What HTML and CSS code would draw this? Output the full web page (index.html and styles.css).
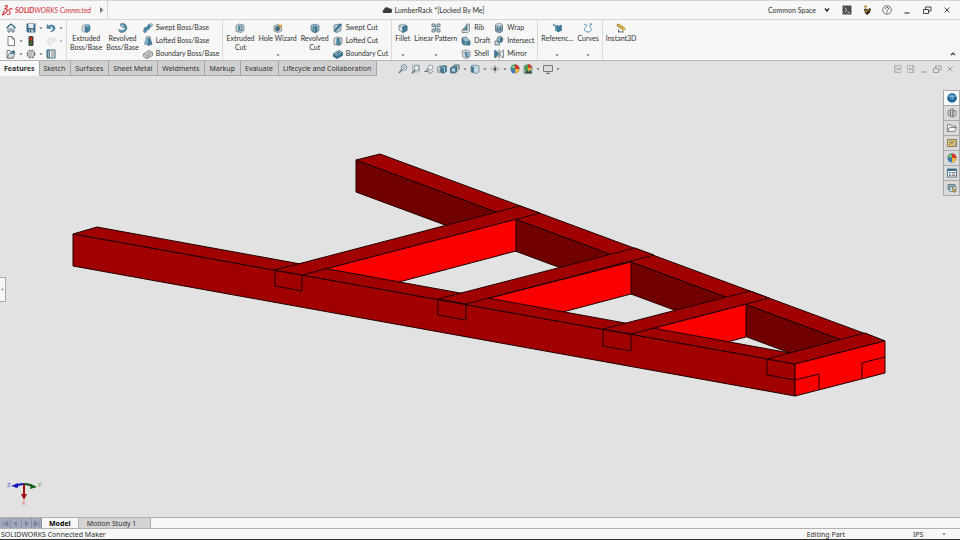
FILE: index.html
```html
<!DOCTYPE html>
<html lang="en">
<head>
    <meta charset="UTF-8">
    <meta name="viewport" content="width=device-width, initial-scale=1.0">
    <title>SOLIDWORKS Connected - LumberRack</title>
    <link rel="stylesheet" href="styles.css">
</head>
<body>
    <!-- Icon set, all drawn on a 20 x 20 grid -->
    <svg class="sprite" aria-hidden="true">
        <symbol id="home" viewBox="0 0 20 20"><path d="M4 9v9h4v-6h4v6h4V9" fill="#e4edf2" stroke="#44606f" stroke-width="1.6"/><path d="M1 10 10 2l9 8" fill="none" stroke="#2f6783" stroke-width="2.4"/></symbol>
        <symbol id="save" viewBox="0 0 20 20"><path d="M1 1h18v18H3l-2-2z" fill="#3d6d89"/><path d="M5 2h10v8H5z" fill="#e8eef2"/><path d="M6 13h9v6H6z" fill="#b7c6cf"/><path d="M8 14h2v4H8z" fill="#345"/></symbol>
        <symbol id="undo" viewBox="0 0 20 20"><path d="M2 3v8h8L7 8c4-2 7 0 7 3s-2 5-5 6c6 0 9-3 9-7 0-5-7-8-13-4z" fill="#4a88ab" stroke="#2f627f"/></symbol>
        <symbol id="redo" viewBox="0 0 20 20"><path d="M18 3v8h-8l3-3c-4-2-7 0-7 3s2 5 5 6c-6 0-9-3-9-7 0-5 7-8 13-4z" fill="#dcdcdc" stroke="#bdbdbd"/></symbol>
        <symbol id="new" viewBox="0 0 20 20"><path d="M4 1h8l5 5v13H4z" fill="#fff" stroke="#555" stroke-width="1.5"/><path d="M12 1v5h5" fill="none" stroke="#555" stroke-width="1.5"/></symbol>
        <symbol id="light" viewBox="0 0 20 20"><rect x="5" y="0" width="10" height="20" rx="3" fill="#3c3c34"/><circle cx="10" cy="5" r="3" fill="#d3321f"/><circle cx="10" cy="10" r="2" fill="#6a5a20"/><circle cx="10" cy="15" r="2.6" fill="#3c7a35"/></symbol>
        <symbol id="open" viewBox="0 0 20 20"><path d="M2 3h6l2 3h5v12H2z" fill="#eef2f4" stroke="#555" stroke-width="1.5"/><path d="m2 18 4-9h12l-4 9z" fill="#cfdde5" stroke="#555" stroke-width="1.3"/><path d="M9 9c0-4 3-5 5-5V1l5 5-5 4V7c-2 0-3 1-3 3z" fill="#3a7596"/></symbol>
        <symbol id="gear" viewBox="0 0 20 20"><circle cx="10" cy="10" r="7.5" fill="#ddd" stroke="#666" stroke-width="2.4" stroke-dasharray="4 1.9"/><circle cx="10" cy="10" r="5.8" fill="#eee" stroke="#777"/><circle cx="10" cy="10" r="2.5" fill="#fff" stroke="#666" stroke-width="1.4"/></symbol>
        <symbol id="props" viewBox="0 0 20 20"><path d="M2 2h16v16H2z" fill="#fff" stroke="#3f6073" stroke-width="2"/><path d="M2 2h6v16H2z" fill="#467b99"/><path d="M10 6h6M10 10h6M10 14h6" stroke="#555" stroke-width="1.6"/><path d="M4 6h2M4 10h2M4 14h2" stroke="#fff" stroke-width="2"/></symbol>
        <symbol id="extrude" viewBox="0 0 20 20"><path d="m2 6 6-3 4 2v11l-5 3-5-3z" fill="#d5dcdf" stroke="#68747a"/><path d="m8 6 6-4 4 3v10l-6 4-4-2z" fill="#4c8dad" stroke="#2c5a73"/><path d="m8 6 4 2 6-3M12 8v11" stroke="#2c5a73" fill="none"/><path d="m8 6 6-4 4 3-6 3z" fill="#93bfd4"/></symbol>
        <symbol id="revolve" viewBox="0 0 20 20"><path d="M5 2c8-3 14 2 12 9l-5-1c1-3-3-5-6-3z" fill="#4c8dad" stroke="#2c5a73"/><path d="M5 2c6 1 9 4 7 8l-6-3z" fill="#a8cada" stroke="#4d7386"/><path d="M1 13c6 3 12 2 17-3-1 6-6 9-11 9-3 0-5-2-6-6z" fill="#5a99b8" stroke="#2c5a73"/></symbol>
        <symbol id="sweep" viewBox="0 0 20 20"><path d="M4 16c0-8 4-3 6-6s1-6 6-6" fill="none" stroke="#2c5a73" stroke-width="6.5" stroke-linecap="round"/><path d="M4 16c0-8 4-3 6-6s1-6 6-6" fill="none" stroke="#4d90b3" stroke-width="4.5" stroke-linecap="round"/><circle cx="16" cy="4" r="2" fill="#a8cada"/></symbol>
        <symbol id="loft" viewBox="0 0 20 20"><path d="M7 3h7l4 13-6 3-9-3z" fill="#427e9d" stroke="#2c5368"/><path d="M7 3h3L9 18l-6-2z" fill="#8fb7ca"/><path d="M7 1h7v3H7z" fill="#d1dce1" stroke="#5a6c75"/></symbol>
        <symbol id="boundary" viewBox="0 0 20 20"><path d="M1 10 12 3l7 4v6L8 19l-7-4z" fill="#d0d3d4" stroke="#666" stroke-width="1.4"/><path d="m1 10 7 4 11-7M8 14v5M5 8l7 4v5M9 5l7 4" fill="none" stroke="#777"/></symbol>
        <symbol id="cut" viewBox="0 0 20 20"><path d="m2 5 6-3 10 2v11l-5 4-11-2z" fill="#c9d1d5" stroke="#5f6d74" stroke-width="1.3"/><path d="M7 6h7v9H7z" fill="#548fac" stroke="#325c72"/><path d="M10 7h3v6h-3z" fill="#a5c7d6"/></symbol>
        <symbol id="wizard" viewBox="0 0 20 20"><path d="m2 6 7-3 8 3v10l-7 3-8-3z" fill="#c9d1d5" stroke="#5f6d74" stroke-width="1.3"/><ellipse cx="9" cy="11" rx="4" ry="5" fill="#47819f" stroke="#2d4d5d"/><path d="m8 14 8-9" stroke="#333" stroke-width="2"/><path d="m13 1 2 3 4-1-2 3 2 4-4-2-3 2 1-4-3-3h4z" fill="#e29b36"/></symbol>
        <symbol id="revcut" viewBox="0 0 20 20"><path d="m2 5 8-3 8 3v10l-4 3V9H6v9l-4-3z" fill="#9fc1d1" stroke="#3a6478" stroke-width="1.3"/><path d="M7 7h6v12H7z" fill="#39779a" stroke="#285268"/><path d="M9 8v10" stroke="#b9d6e3"/></symbol>
        <symbol id="sweepcut" viewBox="0 0 20 20"><path d="m2 4 14-2v13l-8 4-6-2z" fill="#b8c9d1" stroke="#4c6673" stroke-width="1.3"/><path d="M5 17c0-8 3-4 5-8s2-5 7-6" fill="none" stroke="#34718f" stroke-width="4"/></symbol>
        <symbol id="loftcut" viewBox="0 0 20 20"><path d="m2 5 6-3 10 2v11l-5 4-11-2z" fill="#dbe1e4" stroke="#555f64" stroke-width="1.3"/><path d="M8 5h5l2 12H7z" fill="#4c89a8" stroke="#2e5b71"/></symbol>
        <symbol id="boundcut" viewBox="0 0 20 20"><path d="M1 10 12 3l7 4v6L8 19l-7-4z" fill="#397796" stroke="#244d61" stroke-width="1.4"/><path d="m1 10 11-7 7 4-11 7z" fill="#9bc3d5" stroke="#315c70"/><path d="m6 9 6-3 3 2-7 3z" fill="#396e88"/></symbol>
        <symbol id="fillet" viewBox="0 0 20 20"><path d="m2 5 8-3 8 4v9l-8 4-8-5z" fill="#dde7eb" stroke="#50646e" stroke-width="1.3"/><path d="M9 9c0-3 4-4 9-3v9l-8 4z" fill="#417f9f" stroke="#315c71"/><path d="m2 5 7 4v10" fill="none" stroke="#50646e"/></symbol>
        <symbol id="pattern" viewBox="0 0 20 20"><path d="M2 2h6v5H2zM12 2h6v5h-6zM2 12h6v6H2zM12 12h6v6h-6z" fill="#c3d3da" stroke="#4c5b62" stroke-width="1.4"/><path d="M9 4v12M9 10h6" stroke="#3c7b9b" stroke-width="1.6"/></symbol>
        <symbol id="rib" viewBox="0 0 20 20"><path d="M12 2h5v14l-4 3H2v-4z" fill="#d6dde0" stroke="#59666c" stroke-width="1.3"/><path d="M12 4v10H3c5-1 8-5 9-10z" fill="#3d7c9c" stroke="#295066"/></symbol>
        <symbol id="draft" viewBox="0 0 20 20"><path d="m2 4 8-2 8 8v8H5l-3-4z" fill="#447f9e" stroke="#2c5368" stroke-width="1.3"/><path d="m2 4 8-2 8 8-10 1z" fill="#a4c7d6" stroke="#50717f"/><path d="m8 11 2 7" stroke="#d0dfe6"/></symbol>
        <symbol id="shell" viewBox="0 0 20 20"><path d="m2 4 8-2 8 3v10l-7 4-7-3z" fill="#d6dde0" stroke="#59666c" stroke-width="1.3"/><path d="m7 6 8 1v9l-5 1z" fill="#2f6e90"/><path d="m10 8 5 0v6l-3 1z" fill="#85b1c5"/></symbol>
        <symbol id="wrap" viewBox="0 0 20 20"><path d="M3 4h14v12c-4 4-10 4-14 0z" fill="#8ba6b3" stroke="#425963" stroke-width="1.3"/><ellipse cx="10" cy="4" rx="7" ry="3" fill="#d5dfe4" stroke="#425963"/><path d="M6 10h8v5H6z" fill="#326f8f"/><path d="M8 12h4" stroke="#d6e3e9" stroke-width="1.5"/></symbol>
        <symbol id="intersect" viewBox="0 0 20 20"><path d="M2 10h9v8H2z" fill="#c7d6dd" stroke="#4e5e66" stroke-width="1.4"/><circle cx="12" cy="7" r="6" fill="#a5bfca" stroke="#44545c" stroke-width="1.4"/><path d="M7 10h4v3c-2 0-4-1-4-3zM12 4h4v7h-4z" fill="#2e6c8e"/></symbol>
        <symbol id="mirror" viewBox="0 0 20 20"><path d="M1 3h3l4 5v4l-4 5H1z" fill="#407c9b" stroke="#285269"/><path d="M19 3h-3l-4 5v4l4 5h3z" fill="#e4eaed" stroke="#4d5d65" stroke-width="1.4"/><path d="M10 1v18" stroke="#333" stroke-width="1.5"/></symbol>
        <symbol id="reference" viewBox="0 0 20 20"><path d="M4 1v6M1 4h6M2 2l4 4M6 2 2 6" stroke="#4a82a0"/><path d="M7 5h5v12l-5-2z" fill="#5292b3" stroke="#2e637e"/><path d="m12 7 7-3v11l-7 3z" fill="#3c7b9b" stroke="#2e637e"/></symbol>
        <symbol id="curves" viewBox="0 0 20 20"><path d="M2 3c6-2 7 3 3 6s-2 9 5 9 8-6 5-9 0-7 4-7M13 2h5" fill="none" stroke="#4b8fb3" stroke-width="1.8"/></symbol>
        <symbol id="instant" viewBox="0 0 20 20"><path d="m2 3 4-1 13 9-3 4L2 6z" fill="#edc246" stroke="#8a6c22"/><path d="m5 3-1 3m4-1-2 3m5-1-2 3m5-1-2 3" stroke="#5e4b1c"/><path d="M5 12v6l3-1m-3 1 10 0m0 0-3-2" stroke="#444" stroke-width="1.4" fill="none"/></symbol>
        <symbol id="zoomfit" viewBox="0 0 20 20"><circle cx="12" cy="7" r="5.5" fill="#edf3f6" stroke="#6b7b83" stroke-width="1.8"/><path d="m8 11-6 7" stroke="#68767d" stroke-width="3"/><path d="M12 4v6M9 7h6" stroke="#5b8aa1" stroke-width="1.2"/></symbol>
        <symbol id="zoomarea" viewBox="0 0 20 20"><path d="M3 2h14v14H3z" fill="none" stroke="#7a8a92" stroke-width="1.6" stroke-dasharray="3 2"/><circle cx="11" cy="8" r="5" fill="#edf3f6" stroke="#6b7b83" stroke-width="1.6"/><path d="m8 12-6 7" stroke="#68767d" stroke-width="2.6"/></symbol>
        <symbol id="prev" viewBox="0 0 20 20"><circle cx="13" cy="7" r="5" fill="#f0f3f4" stroke="#77858c" stroke-width="1.6"/><path d="M9 10 2 15h8" fill="none" stroke="#77858c" stroke-width="2.4"/><path d="M9 18c4 1 8-1 9-4" fill="none" stroke="#77858c" stroke-width="2"/></symbol>
        <symbol id="section" viewBox="0 0 20 20"><path d="m1 6 6-3v13l-6 1z" fill="#b9c8cf" stroke="#4e6670"/><path d="m8 5 5-2 6 1v11l-5 3H8z" fill="#427f9d" stroke="#31576a"/><path d="M10 7h5v9" fill="none" stroke="#cbdde5" stroke-width="1.6"/></symbol>
        <symbol id="orient" viewBox="0 0 20 20"><path d="m1 8 4-3h9v10l-3 3H1z" fill="#4c829d" stroke="#355766" stroke-width="1.3"/><path d="M7 2h11v10" fill="none" stroke="#44535a" stroke-width="1.8"/><path d="M4 9h6v6H4z" fill="#bdd2dc"/></symbol>
        <symbol id="display" viewBox="0 0 20 20"><path d="m2 4 6-2 10 2v12l-6 3-10-3z" fill="#c5dae4" stroke="#5e7783" stroke-width="1.3"/><path d="m2 4 6 2v12l-6-2z" fill="#457d99"/></symbol>
        <symbol id="eye" viewBox="0 0 20 20"><path d="M1 10c5-5 13-5 18 0-5 4-13 4-18 0z" fill="#e6e6e6" stroke="#999" stroke-width="1.3"/><circle cx="10" cy="10" r="3" fill="#454545"/><path d="M10 2v4M10 14v4" stroke="#777" stroke-width="1.6"/></symbol>
        <symbol id="ball" viewBox="0 0 20 20"><circle cx="10" cy="10" r="9" fill="#3f74b7"/><path d="M10 10V1a9 9 0 0 0-9 9z" fill="#4aa35c"/><path d="M10 10V1a9 9 0 0 1 9 9z" fill="#d53a30"/><path d="M10 10h9a9 9 0 0 1-9 9z" fill="#e5b93f"/><circle cx="7" cy="6" r="2.2" fill="#fff" opacity=".6"/></symbol>
        <symbol id="scene" viewBox="0 0 20 20"><path d="M1 3h18v16H1z" fill="#8fa4ae"/><circle cx="10" cy="8" r="7.5" fill="#4c9c54"/><path d="M10 8V.5A7.5 7.5 0 0 1 17.500 8z" fill="#cf3c32"/><path d="M10 8h7.500a7 7 0 0 1-7.500 7z" fill="#e0b23c"/><path d="m3 19 5-6 3 3 3-4 4 7z" fill="#2d4856"/></symbol>
        <symbol id="monitor" viewBox="0 0 20 20"><path d="M1 3h18v12H1z" fill="#d9dde0" stroke="#6d6d6d" stroke-width="1.8"/><path d="M10 15v3M6 19h8" stroke="#777" stroke-width="2"/></symbol>
        <symbol id="panel-left" viewBox="0 0 20 20"><path d="M3 3h13v14H3zM6 3v14" fill="none" stroke="#a8a8a8" stroke-width="1.6"/><path d="m13 7-4 3 4 3z" fill="#888"/></symbol>
        <symbol id="panel-right" viewBox="0 0 20 20"><path d="M3 3h13v14H3zM13 3v14" fill="none" stroke="#a8a8a8" stroke-width="1.6"/><path d="m7 7 4 3-4 3z" fill="#888"/></symbol>
        <symbol id="minimize" viewBox="0 0 20 20"><path d="M5 16h10" stroke="currentColor" stroke-width="2.200"/></symbol>
        <symbol id="restore" viewBox="0 0 20 20"><path d="M3 9h10v8H3zM7 9V4h11v8h-5" fill="none" stroke="currentColor" stroke-width="1.8"/></symbol>
        <symbol id="close" viewBox="0 0 20 20"><path d="m5 5 10 10M15 5 5 15" stroke="currentColor" stroke-width="1.8"/></symbol>
        <symbol id="chevron" viewBox="0 0 20 20"><path d="m6 7 4 5 4-5" fill="none" stroke="#333" stroke-width="3"/></symbol>
        <symbol id="chevron-up" viewBox="0 0 20 20"><path d="m6 12 4-4 4 4" fill="none" stroke="#333" stroke-width="2.400"/></symbol>
        <symbol id="terminal" viewBox="0 0 20 20"><path d="M1 1h18v18H1z" fill="#4d4d4d"/><path d="m5 5 5 5-5 5M11 15h5" fill="none" stroke="#e4e4e4" stroke-width="1.600"/></symbol>
        <symbol id="avatar" viewBox="0 0 20 20"><circle cx="7" cy="3" r="2.500" fill="#b98525"/><path d="M4 8c4-3 6 1 8 1l3-3 3 2-2 7-6 5-4-4z" fill="#2f2818"/><path d="m7 9 4 2-2 5-3-3zM13 8l3 2-3 4z" fill="#b7832e"/></symbol>
        <symbol id="help" viewBox="0 0 20 20"><circle cx="10" cy="10" r="8.500" fill="#fafafa" stroke="#444" stroke-width="1.500"/><path d="M7 8c0-4 6-4 6-.5 0 2-3 2-3 5M10 14v2" fill="none" stroke="#333" stroke-width="1.800"/></symbol>
        <symbol id="cloud" viewBox="0 0 20 20"><path d="M3 16a4 4 0 0 1 1-7 5.500 5.500 0 0 1 10-2 4.600 4.600 0 0 1 3 9z" fill="#3b3b3b"/></symbol>
        <symbol id="compass" viewBox="0 0 20 20"><circle cx="10" cy="10" r="9.500" fill="#17679a"/><path d="M2 7c5-5 11-5 16 0-5 3-11 3-16 0z" fill="#66a8d0"/><circle cx="10" cy="10" r="3" fill="#fff"/><path d="m9 8 3 2-3 2zM1 12h5M14 12h5" fill="#174a6d" stroke="#0e4163"/></symbol>
        <symbol id="library" viewBox="0 0 20 20"><path d="m2 6 5-2v13l-5-3zM7 3l5-2v17l-5-1zM12 4l6 2v9l-6 3z" fill="#d2d2d2" stroke="#666" stroke-width="1.400"/></symbol>
        <symbol id="folder" viewBox="0 0 20 20"><path d="M1 17V3h6l2 3h8v3M1 17 5 9h14l-4 8z" fill="#f3f3f3" stroke="#666" stroke-width="1.500"/></symbol>
        <symbol id="palette" viewBox="0 0 20 20"><path d="M1 3h18v14H1z" fill="#e8c775" stroke="#706545" stroke-width="1.500"/><path d="M5 6h4v3H5zM12 10h5v4h-5z" fill="#fff" stroke="#5f5a49"/><path d="m4 14 11-9" stroke="#6c5b2d" stroke-width="1.600"/></symbol>
        <symbol id="custom" viewBox="0 0 20 20"><path d="M1 2h18v16H1z" fill="#fff" stroke="#345b73" stroke-width="1.600"/><path d="M1 2h18v4H1z" fill="#3a6f91"/><path d="M4 9h3M4 12h3M4 15h3" stroke="#2d6f9c" stroke-width="2"/><path d="M9 9h8M9 12h8M9 15h8" stroke="#555" stroke-width="1.400"/></symbol>
        <symbol id="forum" viewBox="0 0 20 20"><path d="M2 3h14v10H2z" fill="#8fb0bf" stroke="#566b75" stroke-width="1.500"/><path d="M5 7h13v10H5z" fill="#c7d6dc" stroke="#566b75" stroke-width="1.300"/><path d="m10 8 8 8-4 3-2-4z" fill="#d9a93a" stroke="#695326"/></symbol>
        <symbol id="caret" viewBox="0 0 8 8"><path d="M1 3h6L4 6z" fill="#444"/></symbol>
        <symbol id="first" viewBox="0 0 20 20"><path d="M5 4v12M15 4l-7 6 7 6z" fill="#777e99" stroke="#777e99" stroke-width="1.500"/></symbol>
        <symbol id="back" viewBox="0 0 20 20"><path d="m13 4-7 6 7 6z" fill="#777e99"/></symbol>
        <symbol id="next" viewBox="0 0 20 20"><path d="m7 4 7 6-7 6z" fill="#777e99"/></symbol>
        <symbol id="last" viewBox="0 0 20 20"><path d="M15 4v12M5 4l7 6-7 6z" fill="#777e99" stroke="#777e99" stroke-width="1.500"/></symbol>
    </svg>

    <header class="titlebar">
        <div class="brand">
            <svg class="brand-mark" viewBox="0 0 22 22" aria-hidden="true"><g fill="none" stroke="#d8323a" stroke-width="2.200"><path d="M5 2c7-2 8 1 3 4L5 8c6-1 7 2 4 6-2 3-4 5-8 6l4-9"/><path d="M21 8c-5-2-9 1-6 5s2 6-5 6"/></g></svg>
            <span class="brand-name"><b>SOLID</b>WORKS Connected</span>
            <button class="icon-button brand-more" aria-label="Show menu"><svg viewBox="0 0 20 20"><path d="m6 4 7 6-7 6z" fill="#777"/></svg></button>
        </div>
        <h1 class="document"><svg class="icon"><use href="#cloud"/></svg>LumberRack *[Locked By Me]</h1>
        <div class="window-tools">
            <label class="space">
                <select aria-label="Collaborative space"><option>Common Space</option></select>
                <svg class="icon"><use href="#chevron"/></svg>
            </label>
            <button class="icon-button" aria-label="Command line"><svg><use href="#terminal"/></svg></button>
            <button class="icon-button" aria-label="Account"><svg><use href="#avatar"/></svg></button>
            <button class="icon-button" aria-label="Help"><svg><use href="#help"/></svg></button>
            <button class="icon-button" aria-label="Minimize"><svg><use href="#minimize"/></svg></button>
            <button class="icon-button" aria-label="Restore"><svg><use href="#restore"/></svg></button>
            <button class="icon-button" aria-label="Close"><svg><use href="#close"/></svg></button>
        </div>
    </header>

    <div class="ribbon">
        <div class="group quick">
            <button class="tool" aria-label="Home"><svg class="icon"><use href="#home"/></svg></button>
            <button class="tool" aria-label="Save"><svg class="icon"><use href="#save"/></svg><svg class="caret"><use href="#caret"/></svg></button>
            <button class="tool" aria-label="Undo"><svg class="icon"><use href="#undo"/></svg><svg class="caret"><use href="#caret"/></svg></button>
            <button class="tool" aria-label="New"><svg class="icon"><use href="#new"/></svg><svg class="caret"><use href="#caret"/></svg></button>
            <button class="tool" aria-label="Rebuild"><svg class="icon"><use href="#light"/></svg></button>
            <button class="tool disabled" aria-label="Redo" disabled><svg class="icon"><use href="#redo"/></svg><svg class="caret"><use href="#caret"/></svg></button>
            <button class="tool" aria-label="Open"><svg class="icon"><use href="#open"/></svg><svg class="caret"><use href="#caret"/></svg></button>
            <button class="tool" aria-label="Options"><svg class="icon"><use href="#gear"/></svg><svg class="caret"><use href="#caret"/></svg></button>
            <button class="tool" aria-label="File properties"><svg class="icon"><use href="#props"/></svg></button>
        </div>
        <div class="group">
            <button class="big"><svg class="icon"><use href="#extrude"/></svg><span>Extruded<br>Boss/Base</span></button>
            <button class="big"><svg class="icon"><use href="#revolve"/></svg><span>Revolved<br>Boss/Base</span></button>
            <div class="stack">
                <button class="small"><svg class="icon"><use href="#sweep"/></svg>Swept Boss/Base</button>
                <button class="small"><svg class="icon"><use href="#loft"/></svg>Lofted Boss/Base</button>
                <button class="small"><svg class="icon"><use href="#boundary"/></svg>Boundary Boss/Base</button>
            </div>
        </div>
        <div class="group">
            <button class="big"><svg class="icon"><use href="#cut"/></svg><span>Extruded<br>Cut</span></button>
            <button class="big"><svg class="icon"><use href="#wizard"/></svg><span>Hole Wizard</span><svg class="caret"><use href="#caret"/></svg></button>
            <button class="big"><svg class="icon"><use href="#revcut"/></svg><span>Revolved<br>Cut</span></button>
            <div class="stack">
                <button class="small"><svg class="icon"><use href="#sweepcut"/></svg>Swept Cut</button>
                <button class="small"><svg class="icon"><use href="#loftcut"/></svg>Lofted Cut</button>
                <button class="small"><svg class="icon"><use href="#boundcut"/></svg>Boundary Cut</button>
            </div>
        </div>
        <div class="group">
            <button class="big"><svg class="icon"><use href="#fillet"/></svg><span>Fillet</span><svg class="caret"><use href="#caret"/></svg></button>
            <button class="big"><svg class="icon"><use href="#pattern"/></svg><span>Linear Pattern</span><svg class="caret"><use href="#caret"/></svg></button>
            <div class="stack">
                <button class="small"><svg class="icon"><use href="#rib"/></svg>Rib</button>
                <button class="small"><svg class="icon"><use href="#draft"/></svg>Draft</button>
                <button class="small"><svg class="icon"><use href="#shell"/></svg>Shell</button>
            </div>
            <div class="stack">
                <button class="small"><svg class="icon"><use href="#wrap"/></svg>Wrap</button>
                <button class="small"><svg class="icon"><use href="#intersect"/></svg>Intersect</button>
                <button class="small"><svg class="icon"><use href="#mirror"/></svg>Mirror</button>
            </div>
        </div>
        <div class="group">
            <button class="big"><svg class="icon"><use href="#reference"/></svg><span>Referenc...</span><svg class="caret"><use href="#caret"/></svg></button>
            <button class="big"><svg class="icon"><use href="#curves"/></svg><span>Curves</span><svg class="caret"><use href="#caret"/></svg></button>
        </div>
        <div class="group last">
            <button class="big"><svg class="icon"><use href="#instant"/></svg><span>Instant3D</span></button>
        </div>
        <button class="icon-button collapse" aria-label="Collapse ribbon"><svg><use href="#chevron-up"/></svg></button>
    </div>

    <div class="tab-row">
        <nav class="tabs">
            <button class="tab active">Features</button>
            <button class="tab">Sketch</button>
            <button class="tab">Surfaces</button>
            <button class="tab">Sheet Metal</button>
            <button class="tab">Weldments</button>
            <button class="tab">Markup</button>
            <button class="tab">Evaluate</button>
            <button class="tab">Lifecycle and Collaboration</button>
        </nav>
        <div class="view-tools">
            <button class="icon-button" aria-label="Zoom to fit"><svg><use href="#zoomfit"/></svg></button>
            <button class="icon-button" aria-label="Zoom to area"><svg><use href="#zoomarea"/></svg></button>
            <button class="icon-button" aria-label="Previous view"><svg><use href="#prev"/></svg></button>
            <button class="icon-button" aria-label="Section view"><svg><use href="#section"/></svg></button>
            <button class="icon-button" aria-label="View orientation"><svg><use href="#orient"/></svg></button>
            <svg class="caret"><use href="#caret"/></svg>
            <button class="icon-button" aria-label="Display style"><svg><use href="#display"/></svg></button>
            <svg class="caret"><use href="#caret"/></svg>
            <button class="icon-button" aria-label="Hide or show items"><svg><use href="#eye"/></svg></button>
            <svg class="caret"><use href="#caret"/></svg>
            <button class="icon-button" aria-label="Edit appearance"><svg><use href="#ball"/></svg></button>
            <button class="icon-button" aria-label="Apply scene"><svg><use href="#scene"/></svg></button>
            <svg class="caret"><use href="#caret"/></svg>
            <button class="icon-button" aria-label="View settings"><svg><use href="#monitor"/></svg></button>
            <svg class="caret"><use href="#caret"/></svg>
        </div>
        <div class="view-window">
            <button class="icon-button" aria-label="Left pane"><svg><use href="#panel-left"/></svg></button>
            <button class="icon-button" aria-label="Right pane"><svg><use href="#panel-right"/></svg></button>
            <button class="icon-button" aria-label="Minimize document"><svg><use href="#minimize"/></svg></button>
            <button class="icon-button" aria-label="Restore document"><svg><use href="#restore"/></svg></button>
            <button class="icon-button" aria-label="Close document"><svg><use href="#close"/></svg></button>
        </div>
    </div>

    <main class="viewport">
        <svg class="model" viewBox="0 76 960 441" role="img" aria-label="Lumber rack model">
            <g stroke="#220000" stroke-width="1" stroke-linejoin="round">
                <!-- back rail -->
                <path d="M356 160 842 340 790 353 356 192z" fill="#700000"/>
                <path d="M356 160 380 154 885 341 842 340z" fill="#a00000"/>
                <!-- inner faces of the rungs -->
                <path d="M516 219V251L380 287 302 275z" fill="#fa0000"/>
                <path d="M631 262V294L540 318 466 304z" fill="#fa0000"/>
                <path d="M746 304V337L700 349 631 334z" fill="#fa0000"/>
                <!-- front rail -->
                <path d="M73 234 97 227 790 353 795 364z" fill="#a00000"/>
                <path d="M73 234 795 364V396L73 266z" fill="#a00000"/>
                <!-- rungs -->
                <path d="M274 270 298 264 520 206 540 213 302 275z" fill="#a00000"/>
                <path d="M438 299 635 248 654 255 466 304z" fill="#a00000"/>
                <path d="M603 329 750 291 769 298 631 334z" fill="#a00000"/>
                <path d="M767 359 865 333 885 341 795 364z" fill="#a00000"/>
                <path d="M795 364 885 341V373L795 396z" fill="#fa0000"/>
                <!-- lap joints -->
                <path d="M275 270V286L302 291V275M438 299V315L466 320V304M603 329V346L631 351V334M767 359V375L795 380L819 374V390M885 357 862 363V379" fill="none"/>
            </g>
        </svg>
        <button class="pane-handle" aria-label="Show feature tree">+</button>
        <svg class="triad" viewBox="0 0 40 30" role="img" aria-label="Axes">
            <path d="M18 5c-4 0-7 1-9 3" fill="none" stroke="#1818b8" stroke-width="2"/><path d="m5 7 7-3v5z" fill="#1818b8"/>
            <path d="M18 5c4 0 7 1 9 3" fill="none" stroke="#0b5c14" stroke-width="2"/><path d="m31 8-7 2 1-5z" fill="#0b5c14"/>
            <path d="M18 5v13" stroke="#a01010" stroke-width="2"/><path d="m15 15 6 0-3 6z" fill="#a01010"/>
            <text x="1" y="8" fill="#4545e0">Z</text><text x="32" y="8" fill="#3b8a45">Y</text><text x="16" y="26" fill="#e06060">X</text>
        </svg>
        <aside class="task-pane">
            <button class="task active" aria-label="3DEXPERIENCE"><svg class="icon"><use href="#compass"/></svg></button>
            <button class="task" aria-label="Design library"><svg class="icon"><use href="#library"/></svg></button>
            <button class="task" aria-label="File explorer"><svg class="icon"><use href="#folder"/></svg></button>
            <button class="task" aria-label="View palette"><svg class="icon"><use href="#palette"/></svg></button>
            <button class="task" aria-label="Appearances"><svg class="icon"><use href="#ball"/></svg></button>
            <button class="task" aria-label="Custom properties"><svg class="icon"><use href="#custom"/></svg></button>
            <button class="task" aria-label="Forum"><svg class="icon"><use href="#forum"/></svg></button>
        </aside>
    </main>

    <div class="study-row">
        <div class="pager">
            <button aria-label="First"><svg><use href="#first"/></svg></button>
            <button aria-label="Previous"><svg><use href="#back"/></svg></button>
            <button aria-label="Next"><svg><use href="#next"/></svg></button>
            <button aria-label="Last"><svg><use href="#last"/></svg></button>
        </div>
        <button class="study active">Model</button>
        <button class="study">Motion Study 1</button>
    </div>

    <footer class="status">
        <span>SOLIDWORKS Connected Maker</span>
        <span class="mode">Editing Part</span>
        <label class="units">
            <select aria-label="Unit system"><option>IPS</option></select>
            <svg class="caret"><use href="#caret"/></svg>
        </label>
    </footer>
</body>
</html>
```
FILE: styles.css
```css
* {
    box-sizing: border-box;
}

body {
    display: flex;
    flex-direction: column;
    height: 100vh;
    margin: 0;
    overflow: hidden;
    background: #e2e2e2;
    color: #303030;
    font-family: "Noto Sans", "Open Sans", sans-serif;
    font-size: 7px;
    line-height: 9px;
}

button,
select {
    margin: 0;
    padding: 0;
    border: 0;
    background: none;
    color: inherit;
    font: inherit;
    white-space: nowrap;
}

select {
    appearance: none;
}

.sprite {
    position: absolute;
    width: 0;
    height: 0;
}

.icon,
.icon-button,
.icon-button svg {
    display: block;
    flex: none;
    width: 10px;
    height: 10px;
}

.caret {
    display: block;
    flex: none;
    width: 4px;
    height: 4px;
}

/* Title bar */
.titlebar,
.ribbon {
    background: #f7f7f7;
    font-family: Lato, "Noto Sans", sans-serif;
}

.titlebar {
    display: flex;
    align-items: center;
    height: 20px;
    border-top: 1px solid #d6d6d6;
    border-bottom: 1px solid #d6d6d6;
}

.brand {
    display: flex;
    align-items: center;
    align-self: stretch;
    gap: 2px;
    width: 108px;
    padding-left: 2px;
    border-right: 1px solid #d6d6d6;
}

.brand-mark {
    width: 11px;
    height: 11px;
}

.brand-name {
    color: #d2343b;
    font-style: italic;
}

.brand-more {
    margin-left: auto;
}

.document {
    display: flex;
    flex: 1;
    align-items: center;
    justify-content: center;
    gap: 3px;
    margin: 0;
    padding-right: 10px;
    font-size: 7px;
    font-weight: normal;
}

.window-tools {
    display: flex;
    align-items: center;
    gap: 10px;
    padding-right: 8px;
}

.space {
    display: flex;
    align-items: center;
    gap: 6px;
}

/* Command ribbon */
.ribbon {
    display: flex;
    height: 41px;
    border-bottom: 1px solid #b5b5b5;
}

.group {
    display: flex;
    gap: 4px;
    padding: 1px 3px 0;
    border-right: 1px solid #dadada;
}

.group.last {
    border-right: 0;
}

.quick {
    display: grid;
    grid-template-columns: repeat(3, 20px);
    grid-auto-rows: 13px;
    gap: 0;
    padding-right: 0;
    padding-left: 6px;
}

.tool {
    display: flex;
    align-items: center;
    gap: 3px;
}

.disabled {
    opacity: 0.6;
}

.big {
    display: flex;
    flex-direction: column;
    align-items: center;
    height: 38px;
    padding: 2px 0;
}

.big .icon {
    margin-bottom: 1px;
}

.big .caret {
    margin-top: auto;
}

.stack {
    display: grid;
    grid-auto-rows: 13px;
}

.small {
    display: flex;
    align-items: center;
    gap: 3px;
}

.collapse {
    align-self: flex-end;
    margin: 0 2px 1px auto;
}

/* Command tabs and view toolbar */
.tab-row {
    display: flex;
    align-items: center;
    height: 15px;
    padding-right: 5px;
}

.tabs {
    display: flex;
    height: 15px;
}

.tab {
    padding: 0 5px 0 4px;
    border: 1px solid #a5a5a5;
    border-width: 0 1px 1px 0;
    background: #d0d0d0;
}

.tab.active {
    padding-right: 4px;
    border-bottom-color: #f7f7f7;
    background: #f7f7f7;
    font-weight: bold;
}

.view-tools,
.view-window {
    display: flex;
    align-items: center;
    gap: 3px;
}

.view-tools {
    margin-left: 21px;
}

.view-window {
    margin-left: auto;
    color: #989898;
}

/* Graphics area */
.viewport {
    position: relative;
    flex: 1;
    min-height: 0;
}

.model {
    display: block;
    width: 100%;
    height: 100%;
}

.pane-handle {
    position: absolute;
    top: 201px;
    left: 0;
    width: 6px;
    height: 25px;
    border: 1px solid #aaa;
    border-left: 0;
    background: #f7f7f7;
    color: #888;
}

.triad {
    position: absolute;
    bottom: 8px;
    left: 6px;
    width: 40px;
    height: 30px;
    font-size: 6px;
}

.task-pane {
    position: absolute;
    top: 14px;
    right: 0;
    width: 17px;
    border: 1px solid #aaa;
    border-bottom: 0;
    background: #dadada;
}

.task {
    display: flex;
    align-items: center;
    justify-content: center;
    width: 100%;
    height: 15px;
    border-bottom: 1px solid #aaa;
}

.task.active {
    background: #fafafa;
}

/* Study tabs */
.study-row {
    display: flex;
    height: 11px;
    border-top: 1px solid #b0b0b0;
    background: #f7f7f7;
}

.pager {
    display: flex;
    width: 42px;
    padding-left: 1px;
    background: #a4a8bc;
}

.pager button {
    flex: 1;
    border-right: 1px solid #8c91a8;
}

.pager svg {
    display: block;
    width: 9px;
    height: 9px;
}

.study {
    padding: 0 14px 0 8px;
    border-right: 1px solid #b0b0b0;
    background: #d4d4d4;
}

.study.active {
    padding: 0 7px;
    background: #f7f7f7;
    color: #000;
    font-weight: bold;
}

/* Status bar */
.status {
    display: flex;
    align-items: center;
    height: 12px;
    padding-left: 1px;
    border-top: 1px solid #b0b0b0;
    border-bottom: 1px solid #333;
    background: #f7f7f7;
}

.mode {
    margin-left: auto;
}

.units {
    display: flex;
    align-items: center;
    gap: 18px;
    margin-left: 68px;
    padding-right: 14px;
}
```
